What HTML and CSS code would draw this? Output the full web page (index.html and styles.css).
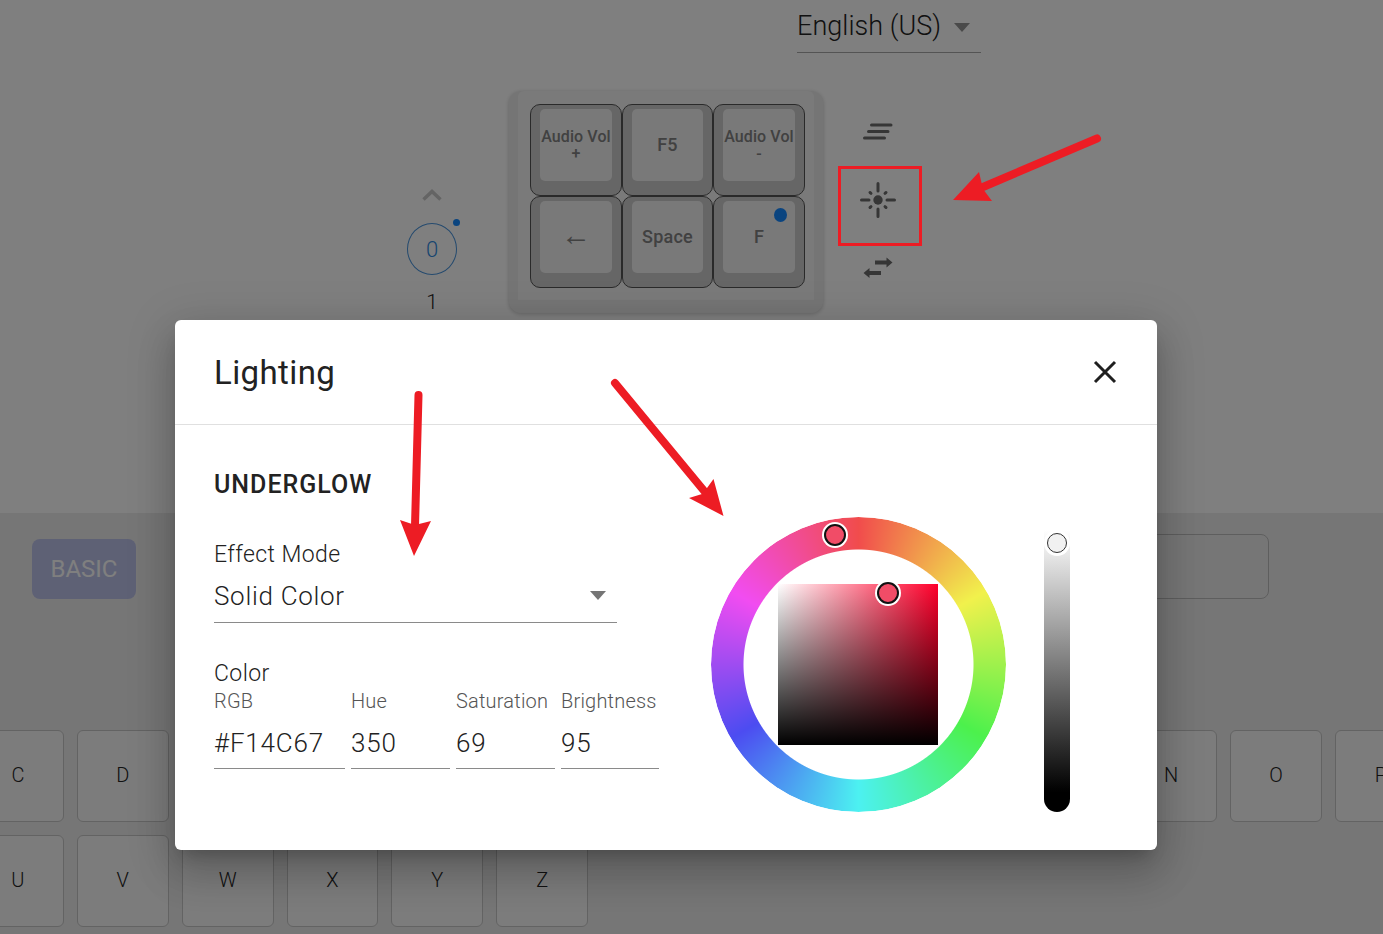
FILE: index.html
```html
<!DOCTYPE html>
<html lang="en">
<head>
<meta charset="utf-8">
<title>Lighting</title>
<link rel="stylesheet" href="styles.css">
</head>
<body>
<div class="page">
  <section class="top">
    <div class="lang"><span>English (US)</span><i class="caret"></i></div>
    <div class="board">
      <div class="layers">
        <svg class="chev" width="20" height="12" viewBox="0 0 20 12"><path d="M1.500 10.500 L10 2.500 L18.500 10.500" fill="none" stroke="#c8c8c8" stroke-width="3.500"/></svg>
        <div class="layer-on">0<i class="layer-dot"></i></div>
        <div class="layer-off">1</div>
      </div>
      <div class="case">
        <div class="case-inner">
          <div class="keys">
            <div class="k"><div class="cap"><span>Audio Vol</span><span>+</span></div></div>
            <div class="k"><div class="cap big">F5</div></div>
            <div class="k"><div class="cap"><span>Audio Vol</span><span>-</span></div></div>
            <div class="k"><div class="cap big arrow-l">←</div></div>
            <div class="k"><div class="cap big">Space</div></div>
            <div class="k"><div class="cap big">F<i class="kdot"></i></div></div>
          </div>
        </div>
      </div>
      <div class="tools">
        <svg width="30" height="18" viewBox="0 0 30 18"><g stroke="#6c6c6c" stroke-width="3" stroke-linecap="round"><path d="M8.500 3H28M5.500 9.500H25M1.500 16H21.500"/></g></svg>
        <svg width="38" height="38" viewBox="0 0 38 38"><circle cx="19" cy="19" r="4.700" fill="#6c6c6c"/><g stroke="#6c6c6c" stroke-width="3" stroke-linecap="round"><path d="M19 2.500V10M19 28V35.500M2.500 19H10M28 19H35.500"/><path d="M11 11.500L12 12.300M27 11.500L26 12.300M11 26.500L12 25.700M27 26.500L26 25.700"/></g></svg>
        <svg width="30" height="22" viewBox="0 0 30 22"><g fill="#6c6c6c"><path d="M12 3.500H23.500V0.500L29.500 5.500L23.500 10.500V7.500H12Z"/><path d="M18 14H6.500V11L0.500 16L6.500 21V18H18Z"/></g></svg>
      </div>
    </div>
  </section>

  <section class="bottom">
    <div class="controls">
      <div class="basic">BASIC</div>
      <div class="field"></div>
    </div>
    <div class="row r1">
      <div class="key">C</div><div class="key">D</div><div class="key">E</div><div class="key">F</div><div class="key">G</div><div class="key">H</div><div class="key">I</div><div class="key">J</div><div class="key">K</div><div class="key">L</div><div class="key">M</div><div class="key">N</div><div class="key">O</div><div class="key">P</div>
    </div>
    <div class="row r2">
      <div class="key">U</div><div class="key">V</div><div class="key">W</div><div class="key">X</div><div class="key">Y</div><div class="key">Z</div>
    </div>
  </section>

  <div class="overlay"></div>

  <div class="modal">
    <header class="modal-head">
      <h2>Lighting</h2>
      <svg class="close" width="26" height="26" viewBox="0 0 26 26"><path d="M3 3L23 23M23 3L3 23" stroke="#1f1f1f" stroke-width="3" fill="none"/></svg>
    </header>
    <div class="modal-body">
      <div class="form">
        <h3>UNDERGLOW</h3>
        <div class="lbl">Effect Mode</div>
        <div class="select"><span>Solid Color</span><i class="caret"></i></div>
        <div class="lbl color-lbl">Color</div>
        <div class="inputs">
          <div class="inp w1"><small>RGB</small><span>#F14C67</span></div>
          <div class="inp w2"><small>Hue</small><span>350</span></div>
          <div class="inp w2"><small>Saturation</small><span>69</span></div>
          <div class="inp w3"><small>Brightness</small><span>95</span></div>
        </div>
      </div>
      <div class="picker">
        <div class="wheel">
          <div class="ring"></div>
          <div class="sv"></div>
          <i class="thumb hue-thumb"></i>
          <i class="thumb sv-thumb"></i>
        </div>
        <div class="slider"><i class="slide-thumb"></i></div>
      </div>
    </div>
  </div>

  <div class="redbox"></div>
  <svg class="arrows" width="1383" height="934" viewBox="0 0 1383 934">
    <g fill="#ed1c24" stroke="#ed1c24">
      <path d="M1097 138.500L983 187" stroke-width="8" stroke-linecap="round"/>
      <path d="M953 200L979 172L983 189L992 201Z" stroke="none"/>
      <path d="M418.500 395L415 526" stroke-width="8" stroke-linecap="round"/>
      <path d="M414 556L400 520L415 525L431 521Z" stroke="none"/>
      <path d="M615 383L705 492" stroke-width="8" stroke-linecap="round"/>
      <path d="M723.500 516L689 498L702 494L707 488L713.500 479Z" stroke="none"/>
    </g>
  </svg>
</div>
</body>
</html>
```
FILE: styles.css
```css
* { box-sizing: border-box; }
html, body { margin: 0; height: 100%; }
body { font-family: Roboto, "Liberation Sans", sans-serif; color: #222; background: #fff; }
.page { position: relative; width: 100%; height: 934px; overflow: hidden; display: flex; flex-direction: column; background: #fff; }
i { display: block; }

.top { height: 513px; flex: none; padding-left: 407px; display: flex; flex-direction: column; }
.lang { margin-left: 390px; width: 184px; height: 53px; border-bottom: 1px solid #a8a8a8; display: flex; align-items: center; justify-content: space-between; font-size: 27px; font-weight: 300; padding: 0 11px 0 0; color: #222; letter-spacing: .05px; }
.caret { width: 0; height: 0; border-left: 8.500px solid transparent; border-right: 8.500px solid transparent; border-top: 9px solid #949494; margin-top: 3px; }

.board { display: flex; margin-top: 37px; align-items: flex-start; }
.layers { width: 50px; margin-right: 52px; padding-top: 99px; display: flex; flex-direction: column; align-items: center; }
.chev { display: block; margin-bottom: 22px; }
.layer-on { position: relative; width: 50px; height: 52px; border: 1px solid #4a94dc; border-radius: 50%; color: #2f8ae0; font-size: 22px; font-weight: 300; display: flex; align-items: center; justify-content: center; }
.layer-dot { position: absolute; right: -4px; top: -5px; width: 7px; height: 7px; border-radius: 50%; background: #1488ff; }
.layer-off { margin-top: 14px; font-size: 21px; font-weight: 300; line-height: 26px; color: #222; }

.case { width: 314px; height: 222px; margin-top: 1px; background: #ebebeb; border-radius: 12px; padding: 0 9px 13px; box-shadow: 0 1px 4px rgba(0,0,0,.22); }
.case-inner { height: 100%; background: #f4f4f4; border-radius: 6px 6px 0 0; padding: 13px 0 0 12px; }
.keys { display: grid; grid-template-columns: 92px 91px 92px; grid-template-rows: 92px 92px; }
.k { background: #cccccc; border: 1px solid #555; border-radius: 10px; padding: 4px 9px 0 9px; }
.cap { height: 72px; background: #f2f2f2; border-radius: 5px; display: flex; flex-direction: column; align-items: center; justify-content: center; font-size: 16px; font-weight: 500; color: #828282; line-height: 17px; position: relative; white-space: nowrap; letter-spacing: .1px; }
.cap.big { font-size: 18px; letter-spacing: .2px; padding-bottom: 1px; }
.cap.arrow-l { font-size: 30px; font-weight: 400; padding-bottom: 6px; }
.kdot { position: absolute; top: 7px; right: 8px; width: 13px; height: 14px; border-radius: 50%; background: #1488ff; }

.tools { margin-left: 37px; width: 36px; padding-top: 32px; display: flex; flex-direction: column; align-items: center; }
.tools svg { display: block; flex: none; }
.tools svg:nth-child(1) { margin-bottom: 41px; }
.tools svg:nth-child(2) { margin-bottom: 38px; }

.bottom { flex: 1; background: #ededed; padding-top: 21px; }
.controls { margin-left: 32px; width: 1237px; display: flex; justify-content: space-between; height: 65px; }
.basic { width: 104px; height: 60px; margin-top: 5px; background: #bdc3ea; border-radius: 8px; color: #fff; font-size: 24px; display: flex; align-items: center; justify-content: center; }
.field { width: 400px; height: 65px; border: 1px solid #bdbdbd; border-radius: 8px; }
.row { display: flex; gap: 13px; margin-left: -28px; }
.r1 { margin-top: 131px; }
.r2 { margin-top: 13px; }
.key { width: 91.850px; height: 92px; flex: none; background: #f8f8f8; border: 1px solid #c6c6c6; border-radius: 6px; font-size: 20px; font-weight: 300; color: #222; display: flex; align-items: center; justify-content: center; padding-bottom: 2px; }

.overlay { position: absolute; inset: 0; background: rgba(0,0,0,.5); }

.modal { position: absolute; left: 175px; top: 320px; width: 982px; height: 530px; background: #fff; border-radius: 6px; box-shadow: 0 11px 15px -7px rgba(0,0,0,.2), 0 24px 38px 3px rgba(0,0,0,.14), 0 9px 46px 8px rgba(0,0,0,.12); }
.modal-head { height: 105px; border-bottom: 1px solid #e0e0e0; display: flex; align-items: center; justify-content: space-between; padding: 0 39px 0 39px; }
.modal-head h2 { margin: 0; font-size: 33px; font-weight: 400; letter-spacing: .4px; color: #222; }
.close { display: block; }
.modal-body { display: flex; padding: 0 0 0 39px; }
.form { width: 445px; flex: none; padding-top: 44px; }
.form h3 { margin: 0; font-size: 25px; line-height: 32px; font-weight: 500; letter-spacing: 1px; color: #222; }
.lbl { font-size: 23px; font-weight: 300; line-height: 28px; color: #222; letter-spacing: .4px; margin-top: 40px; }
.select { width: 403px; height: 50px; border-bottom: 1px solid #8a8a8a; display: flex; align-items: center; justify-content: space-between; font-size: 26px; font-weight: 300; padding: 0 11px 4px 0; color: #222; letter-spacing: .7px; margin-top: 4px; }
.select .caret { border-top-color: #757575; margin-top: 0; }
.color-lbl { margin-top: 37px; }
.inputs { display: flex; gap: 6px; }
.inp { display: flex; flex: none; flex-direction: column; border-bottom: 1px solid #8a8a8a; height: 81px; }
.w1 { width: 131px; }
.w2 { width: 99px; }
.w3 { width: 98px; }
.inp small { font-size: 20px; font-weight: 300; line-height: 26px; color: #555; letter-spacing: .2px; white-space: nowrap; }
.inp span { font-size: 26px; font-weight: 300; line-height: 34px; margin-top: 12px; color: #222; letter-spacing: .8px; }

.picker { display: flex; margin-left: 52px; padding-top: 92px; align-items: flex-start; }
.wheel { position: relative; width: 295px; height: 295px; display: flex; align-items: center; justify-content: center; }
.ring { position: absolute; inset: 0; border-radius: 50%; background: conic-gradient(#f14c4c, #f1f14c 60deg, #4cf14c 120deg, #4cf1f1 180deg, #4c4cf1 240deg, #f14cf1 300deg, #f14c4c); -webkit-mask: radial-gradient(circle, transparent 114.500px, #000 115.500px); mask: radial-gradient(circle, transparent 114.500px, #000 115.500px); }
.sv { width: 160px; height: 161px; margin-right: 1px; position: relative; background: linear-gradient(to top, #000, transparent), linear-gradient(to right, #fff, #ff002b); }
.thumb { position: absolute; width: 22px; height: 22px; border-radius: 50%; background: #f14c67; border: 2px solid #111; box-shadow: 0 0 0 2px #fff; }
.hue-thumb { left: 113px; top: 7px; }
.sv-thumb { left: 166px; top: 65px; }
.slider { position: relative; width: 26px; height: 282px; margin-left: 38px; margin-top: 13px; border-radius: 0 0 13px 13px; background: linear-gradient(to bottom, #fff, #000 93%); }
.slide-thumb { position: absolute; left: 3px; top: 3px; width: 20px; height: 20px; border-radius: 50%; background: #f1f1f1; border: 1px solid #333; box-shadow: 0 0 0 3px #fff; }

.redbox { position: absolute; left: 838px; top: 166px; width: 84px; height: 80px; border: 3px solid #ed1c24; }
.arrows { position: absolute; left: 0; top: 0; display: block; }
```
